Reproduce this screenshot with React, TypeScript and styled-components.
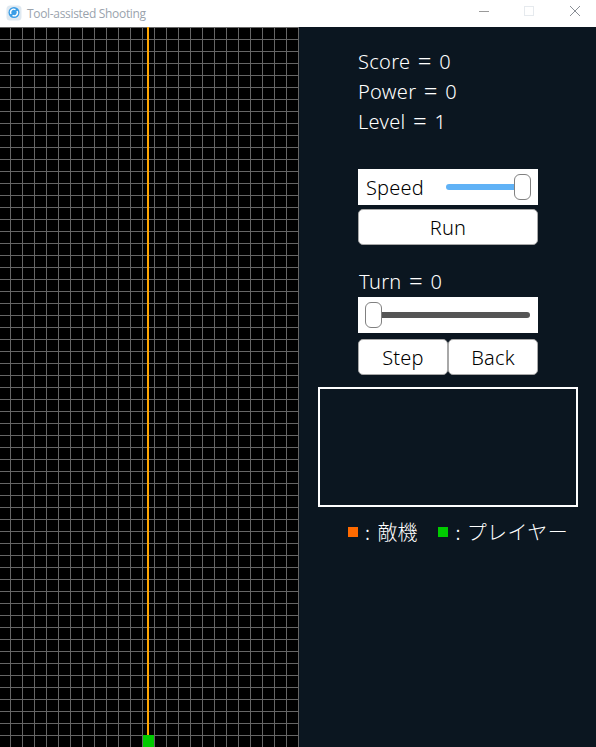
import React from "react";
import styled, { createGlobalStyle } from "styled-components";

const Global = createGlobalStyle`
  html, body { margin: 0; padding: 0; width: 596px; height: 747px; overflow: hidden; background: #0b1620; }
  * { box-sizing: border-box; }
`;
const Window = styled.div`
  width: 596px; height: 747px; display: flex; flex-direction: column;
  font-family: "Noto Sans", "Noto Sans CJK JP", sans-serif;
`;
const TitleBar = styled.div`
  height: 27px; flex: none; background: #fff; display: flex; align-items: center; padding: 0 0 0 6px;
`;
const AppIcon = styled.svg`width: 16px; height: 16px; flex: none; position: relative; top: -1px;`;
const TitleText = styled.span`
  margin-left: 5px; font: 12px "Open Sans", sans-serif; letter-spacing: -0.32px; color: #9aa3ad; flex: 1;
`;
const WinButton = styled.div`
  width: 46px; height: 27px; display: flex; align-items: center; justify-content: center; padding: 0 0 5px 0;
  &:first-child { padding-left: 2px; }
`;
const WinButtons = styled.div`display: flex; margin-right: -2px;`;
const Main = styled.div`flex: 1; display: flex; min-height: 0;`;
const Field = styled.div`
  width: 299px; flex: none; position: relative; background-color: #000; overflow: hidden;
  background-image:
    linear-gradient(to right, #666 1px, transparent 1px),
    linear-gradient(to bottom, #666 1px, transparent 1px);
  background-size: 12px 12px;
  background-position: -2px 0;
`;
const Beam = styled.div`
  position: absolute; left: 147px; top: 0; width: 2px; height: 708px; background: #ffa500;
`;
const Player = styled.div`
  position: absolute; left: 143px; top: 708px; width: 11px; height: 12px; background: #00cc00;
`;
const Side = styled.div`
  flex: 1; background: #0b1620; color: #fff; padding: 20px 0 0 19px; font-size: 20px; font-weight: 300;
`;
const Stats = styled.div`
  padding-left: 40px; display: flex; flex-direction: column; margin-bottom: 32px;
`;
const StatLine = styled.div`
  height: 30px; line-height: 30px; white-space: nowrap; word-spacing: 2px; letter-spacing: 0.3px;
`;
const Equals = styled.span`font-size: 24px; line-height: 1; position: relative; top: 1px;`;
const Controls = styled.div`padding-left: 40px; width: 220px; display: flex; flex-direction: column;`;
const SliderBar = styled.div`
  width: 180px; height: 36px; background: #fff; color: #000; display: flex; align-items: center;
  padding: 0 8px; position: relative;
`;
const SliderLabel = styled.span`width: 80px; flex: none; line-height: 36px; position: relative; top: 1px; letter-spacing: 0.2px;`;
const Track = styled.div<{ $color: string }>`
  flex: 1; height: 6px; border-radius: 3px; background: ${p => p.$color}; position: relative;
`;
const Thumb = styled.div<{ $end?: boolean }>`
  position: absolute; top: -10px; ${p => (p.$end ? "right: -1px" : "left: -1px")};
  width: 17px; height: 26px; background: #fff; border: 1px solid #808080; border-radius: 6px;
`;
const Button = styled.div`
  height: 36px; background: #fff; color: #000; border: 1px solid #a8a8a8; border-radius: 5px; letter-spacing: 0.2px;
  flex: 1; display: flex; align-items: center; justify-content: center; line-height: 1; padding-top: 2px;
`;
const RunWrap = styled.div`display: flex; margin-top: 4px; margin-bottom: 22px;`;
const TurnLine = styled(StatLine)`margin-left: 1px;`;
const ButtonRow = styled.div`display: flex; margin-top: 6px;`;
const Message = styled.div`
  width: 260px; height: 120px; border: 2px solid #fff; margin-top: 12px;
`;
const Legend = styled.div`
  display: flex; align-items: center; margin-top: 9px; padding-left: 30px; height: 30px; color: #fff;
  font-family: "Noto Sans CJK JP", sans-serif; font-size: 20px; white-space: nowrap;
`;
const Swatch = styled.span<{ $color: string }>`
  width: 10px; height: 10px; background: ${p => p.$color}; flex: none; margin-right: 7px; position: relative; top: 1px;
`;
const LegendItem = styled.span`margin-right: 21px; word-spacing: 3px;`;
const LegendLast = styled.span`word-spacing: 1px; letter-spacing: 0.4px;`;

export default function App() {
  return (
    <Window>
      <Global />
      <TitleBar>
        <AppIcon viewBox="0 0 16 16">
          <rect x="0.5" y="0.5" width="15" height="15" rx="3.5" fill="#dfe9f1" />
          <circle cx="8" cy="7.5" r="5.5" fill="#3a9de6" />
          <path d="M5 9a3.2 3.2 0 0 1 4.5-4.3M11 6a3.2 3.2 0 0 1-4.5 4.3" stroke="#fff" strokeWidth="1.4" fill="none" />
        </AppIcon>
        <TitleText>Tool-assisted Shooting</TitleText>
        <WinButtons>
          <WinButton>
            <svg width="10" height="10" viewBox="0 0 10 10"><path d="M0 5.5h10" stroke="#9a9a9a" /></svg>
          </WinButton>
          <WinButton>
            <svg width="10" height="10" viewBox="0 0 10 10"><rect x="0.5" y="0.5" width="9" height="9" fill="none" stroke="#e6eaee" /></svg>
          </WinButton>
          <WinButton>
            <svg width="10" height="10" viewBox="0 0 10 10"><path d="M0 0l10 10M10 0L0 10" stroke="#8a8f96" /></svg>
          </WinButton>
        </WinButtons>
      </TitleBar>
      <Main>
        <Field>
          <Beam />
          <Player />
        </Field>
        <Side>
          <Stats>
            <StatLine>Score <Equals>=</Equals> 0</StatLine>
            <StatLine>Power <Equals>=</Equals> 0</StatLine>
            <StatLine>Level <Equals>=</Equals> 1</StatLine>
          </Stats>
          <Controls>
            <SliderBar>
              <SliderLabel>Speed</SliderLabel>
              <Track $color="#60b2f6"><Thumb $end /></Track>
            </SliderBar>
            <RunWrap><Button>Run</Button></RunWrap>
            <TurnLine>Turn <Equals>=</Equals> 0</TurnLine>
            <SliderBar>
              <Track $color="#555555"><Thumb /></Track>
            </SliderBar>
            <ButtonRow><Button>Step</Button><Button>Back</Button></ButtonRow>
          </Controls>
          <Message />
          <Legend>
            <Swatch $color="#ff6a00" />
            <LegendItem>: 敵機</LegendItem>
            <Swatch $color="#00cc00" />
            <LegendLast>: プレイヤー</LegendLast>
          </Legend>
        </Side>
      </Main>
    </Window>
  );
}
